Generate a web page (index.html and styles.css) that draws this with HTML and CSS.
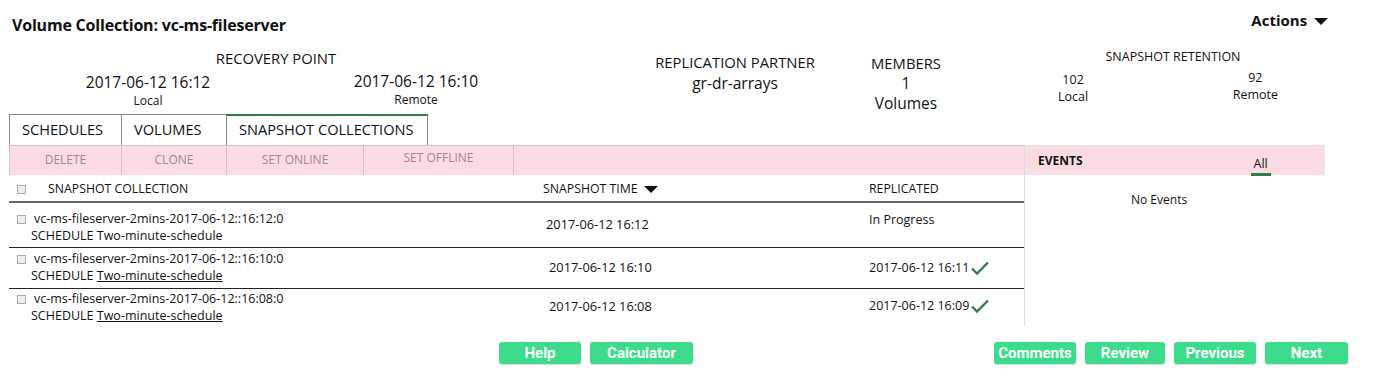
FILE: index.html
```html
<!DOCTYPE html>
<html lang="en">

<head>
    <meta charset="UTF-8" />
    <title>Volume Collection | vc-ms-fileserver</title>
    <link rel="stylesheet" href="styles.css">
</head>

<body>
    <div class="page-head">
        <h1>Volume Collection: vc-ms-fileserver</h1>
        <div class="actions">Actions <span class="caret"></span></div>
    </div>

    <div class="summary">
        <div class="recovery">
            <div class="label">RECOVERY POINT</div>
            <div class="pair">
                <div class="local">
                    <div class="big">2017-06-12 16:12</div>
                    <div class="small">Local</div>
                </div>
                <div class="remote">
                    <div class="big">2017-06-12 16:10</div>
                    <div class="small">Remote</div>
                </div>
            </div>
        </div>
        <div class="partner">
            <div class="label">REPLICATION PARTNER</div>
            <div class="big">gr-dr-arrays</div>
        </div>
        <div class="members">
            <div class="label">MEMBERS</div>
            <div class="big">1</div>
            <div class="big">Volumes</div>
        </div>
        <div class="retention">
            <div class="label">SNAPSHOT RETENTION</div>
            <div class="pair">
                <div class="ret-local">
                    <div>102</div>
                    <div>Local</div>
                </div>
                <div class="ret-remote">
                    <div>92</div>
                    <div>Remote</div>
                </div>
            </div>
        </div>
    </div>

    <div class="tabs">
        <div class="tab">SCHEDULES</div>
        <div class="tab">VOLUMES</div>
        <div class="tab active">SNAPSHOT COLLECTIONS</div>
    </div>

    <div class="main">
        <div class="left">
            <div class="toolbar">
                <div class="tool t-delete">DELETE</div>
                <div class="tool t-clone">CLONE</div>
                <div class="tool t-online">SET ONLINE</div>
                <div class="tool t-offline">SET OFFLINE</div>
            </div>

            <div class="row head">
                <div class="cell name"><span class="check"></span>SNAPSHOT COLLECTION</div>
                <div class="cell time">SNAPSHOT TIME <span class="caret"></span></div>
                <div class="cell repl">REPLICATED</div>
            </div>

            <div class="row r1">
                <div class="cell name">
                    <div><span class="check"></span>vc-ms-fileserver-2mins-2017-06-12::16:12:0</div>
                    <div class="sched">SCHEDULE Two-minute-schedule</div>
                </div>
                <div class="cell time">2017-06-12 16:12</div>
                <div class="cell repl">In Progress</div>
            </div>

            <div class="row r2">
                <div class="cell name">
                    <div><span class="check"></span>vc-ms-fileserver-2mins-2017-06-12::16:10:0</div>
                    <div class="sched">SCHEDULE <a href="#">Two-minute-schedule</a></div>
                </div>
                <div class="cell time">2017-06-12 16:10</div>
                <div class="cell repl">2017-06-12 16:11<svg class="tick" width="20" height="16" viewBox="0 0 20 16"><path d="M2 8.5 L7 13.5 L18 2.5" fill="none" stroke="#2f7d4a" stroke-width="2.4" /></svg></div>
            </div>

            <div class="row r3">
                <div class="cell name">
                    <div><span class="check"></span>vc-ms-fileserver-2mins-2017-06-12::16:08:0</div>
                    <div class="sched">SCHEDULE <a href="#">Two-minute-schedule</a></div>
                </div>
                <div class="cell time">2017-06-12 16:08</div>
                <div class="cell repl">2017-06-12 16:09<svg class="tick" width="20" height="16" viewBox="0 0 20 16"><path d="M2 8.5 L7 13.5 L18 2.5" fill="none" stroke="#2f7d4a" stroke-width="2.4" /></svg></div>
            </div>
        </div>

        <div class="events">
            <div class="events-head">
                <span class="events-title">EVENTS</span>
                <span class="events-all">All</span>
            </div>
            <div class="no-events">No Events</div>
        </div>
    </div>

    <div class="footer">
        <div class="btn-group">
            <button class="btn b-help">Help</button>
            <button class="btn b-calc">Calculator</button>
        </div>
        <div class="btn-group">
            <button class="btn b-comments">Comments</button>
            <button class="btn b-review">Review</button>
            <button class="btn b-prev">Previous</button>
            <button class="btn b-next">Next</button>
        </div>
    </div>
</body>

</html>
```

FILE: styles.css
```css
body {
    margin: 0;
    font-family: "Open Sans", "Noto Sans", sans-serif;
    color: #111;
    background: white;
    width: 1384px;
    height: 387px;
    overflow: hidden;
}

.page-head {
    display: flex;
    justify-content: space-between;
    align-items: center;
    padding: 15px 56px 0 12px;
    height: 22px;
}

h1 {
    margin: 0;
    font-size: 16px;
    font-weight: bold;
    letter-spacing: -0.2px;
    margin-top: -2px;
}

.actions {
    font-size: 15px;
    font-weight: bold;
    margin-top: -13px;
}

.caret {
    display: inline-block;
    width: 0;
    height: 0;
    border-left: 7px solid transparent;
    border-right: 7px solid transparent;
    border-top: 7px solid #111;
    vertical-align: middle;
    margin-left: 3px;
}

.summary {
    display: flex;
    height: 77px;
    font-size: 14.8px;
}

.summary .big {
    font-size: 15.5px;
    line-height: 16px;
}

.summary .small {
    font-size: 12px;
    line-height: 12px;
    margin-top: 5px;
}

.recovery {
    margin-left: 16px;
    width: 536px;
    padding-top: 11px;
    text-align: center;
}

.recovery .label {
    padding-right: 16px;
    line-height: 20px;
}

.pair {
    display: flex;
}

.recovery .local {
    width: 264px;
    padding-top: 6px;
}

.recovery .remote {
    width: 272px;
    padding-top: 5px;
}

.partner {
    margin-left: 83px;
    width: 200px;
    text-align: center;
    padding-top: 15px;
    line-height: 21px;
}

.partner .big {
    line-height: 21px;
}

.members {
    margin-left: 11px;
    width: 120px;
    text-align: center;
    padding-top: 16px;
    line-height: 20px;
}

.members .big {
    line-height: 20px;
}

.retention {
    margin-left: 74px;
    width: 266px;
    text-align: center;
    padding-top: 12px;
    font-size: 12.5px;
}

.retention .label {
    line-height: 16px;
    margin-bottom: 6px;
}

.retention .pair {
    justify-content: space-between;
    padding: 0 28px 0 18px;
    line-height: 17px;
}

.ret-remote {
    margin-top: -2px;
}

.tabs {
    display: flex;
    margin-left: 9px;
    height: 31px;
}

.tab {
    font-size: 14.6px;
    padding: 0 13px 0 12px;
    line-height: 28px;
    border: 1px solid #8a8a8a;
    border-bottom: none;
    border-right: none;
}

.tab:nth-child(1) {
    width: 86px;
}

.tab:nth-child(2) {
    width: 79px;
}

.tab.active {
    width: 175px;
    border-top: 2px solid #2e7d4a;
    border-right: 1px solid #8a8a8a;
    line-height: 27px;
}

.main {
    display: flex;
    margin-left: 9px;
}

.left {
    width: 1015px;
}

.toolbar {
    display: flex;
    background: #fcdce4;
    height: 29px;
    border-top: 1px solid #d8c4ca;
}

.tool {
    font-size: 12px;
    color: #a08890;
    text-align: center;
    line-height: 28px;
    border-left: 1px solid #d8c0c8;
    border-right: 1px solid #d8c0c8;
    margin-right: -1px;
    box-sizing: border-box;
}

.t-delete { width: 113px; }
.t-clone { width: 106px; }
.t-online { width: 138px; }
.t-offline { width: 151px; line-height: 24px; }

.row {
    display: flex;
    font-size: 12.5px;
    line-height: 17px;
    border-bottom: 1px solid #222;
    box-sizing: border-box;
}

.row.head {
    height: 28px;
    border-bottom: 2px solid #666;
    align-items: center;
    padding-top: 1px;
    font-size: 12.3px;
}

.check {
    display: inline-block;
    width: 7px;
    height: 7px;
    border: 1px solid #aaa;
    background: #eee;
    margin: 0 8px 0 8px;
    vertical-align: -1px;
}

.head .name .check {
    margin-right: 22px;
}

.cell {
    box-sizing: border-box;
}

.cell.name {
    width: 526px;
}

.cell.time {
    width: 334px;
    padding-left: 8px;
    font-size: 12.8px;
}

.cell.repl {
    flex: 1;
    display: flex;
    align-items: center;
    height: 17px;
}

.head .cell.time {
    font-size: 12.3px;
}

.head .cell.repl {
    height: auto;
}

.sched {
    padding-left: 22px;
}

.sched a {
    color: #111;
}

.row.r1 {
    height: 45px;
    padding-top: 7px;
}

.row.r1 .time {
    padding-left: 11px;
    margin-top: 6px;
}

.row.r1 .repl {
    margin-top: 1px;
}

.row.r2 {
    height: 41px;
    padding-top: 2px;
}

.row.r2 .time,
.row.r3 .time {
    padding-left: 14px;
}

.row.r2 .time,
.row.r2 .repl {
    margin-top: 9px;
}

.row.r3 {
    height: 39px;
    padding-top: 1px;
    border-bottom: none;
}

.row.r3 .time {
    margin-top: 8px;
}

.row.r3 .repl {
    margin-top: 7px;
}

.tick {
    margin-left: 1px;
}

.events {
    width: 300px;
    border-left: 1px solid #ddd;
    height: 181px;
}

.events-head {
    display: flex;
    background: #fcdce4;
    height: 29px;
    align-items: center;
    font-size: 12px;
    border-top: 1px solid #f0dde2;
}

.events-title {
    font-weight: bold;
    padding-left: 13px;
}

.events-all {
    margin-left: 168px;
    border-bottom: 3px solid #2e7d4a;
    padding: 6px 3px 1px;
    margin-top: 4px;
    font-size: 12.5px;
}

.no-events {
    font-size: 12px;
    margin-top: 16px;
    padding-left: 106px;
}

.footer {
    display: flex;
    margin-top: 14px;
    padding-left: 499px;
}

.btn-group {
    display: flex;
    gap: 9px;
}

.btn-group + .btn-group {
    margin-left: 301px;
}

.btn {
    background: #3ddc8c;
    color: white;
    border: none;
    border-radius: 3px;
    height: 22px;
    font-family: "Roboto", sans-serif;
    font-weight: bold;
    font-size: 15px;
    padding: 0;
    box-shadow: 0 1px 1px rgba(0, 0, 0, 0.15);
}

.b-help { width: 82px; }
.b-calc { width: 103px; }
.b-comments { width: 82px; }
.b-review { width: 80px; }
.b-prev { width: 82px; }
.b-next { width: 83px; }
```
